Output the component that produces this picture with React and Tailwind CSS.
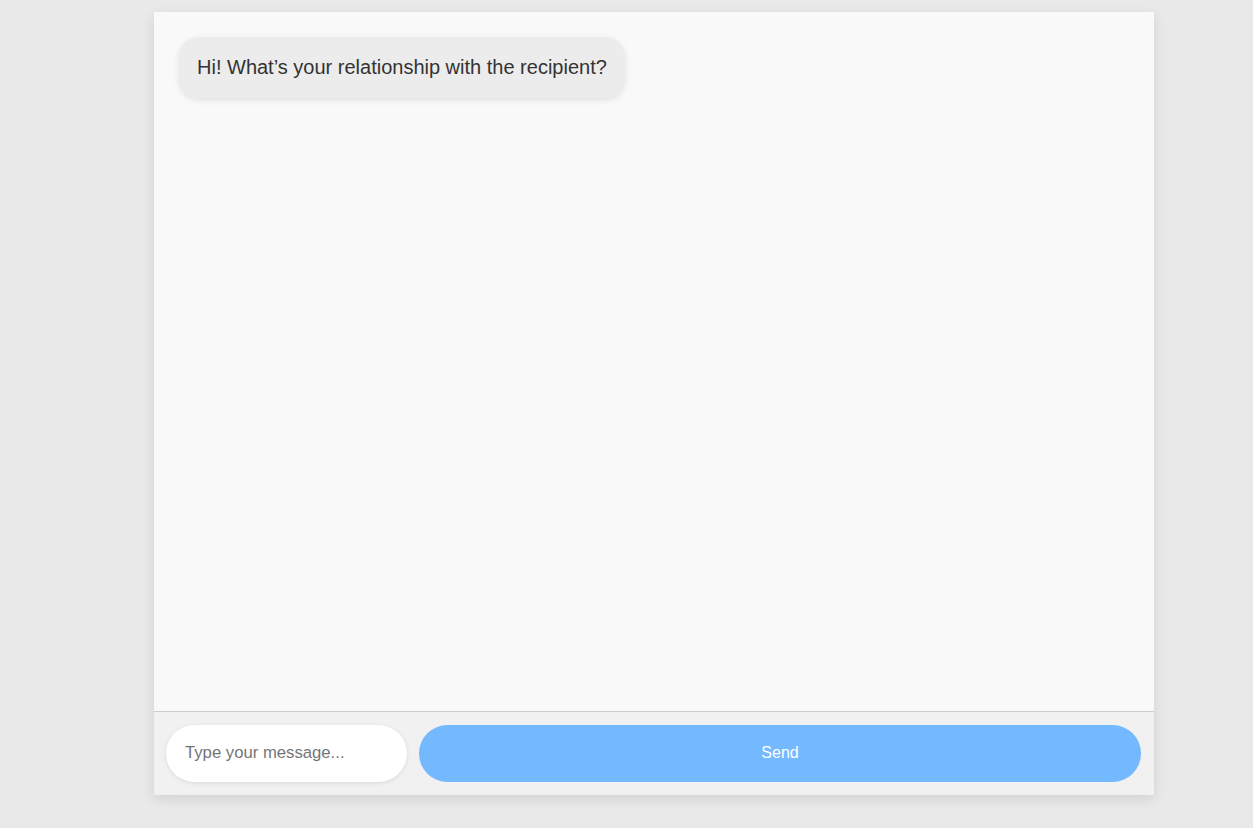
export default function App() {
  return (
    <div className="min-h-[828px] w-full bg-[#e9e9e9] pt-[12px]" style={{ fontFamily: '"Liberation Sans", Arial, sans-serif' }}>
      <div className="ml-[154px] flex h-[783px] w-[1000px] flex-col bg-[#f9f9f9] shadow-[0_4px_12px_rgba(0,0,0,0.1)]">
        <div className="flex-1 px-[25px] pt-[25px]">
          <div className="inline-block rounded-[20px] bg-[#ececec] px-[18px] py-[19px] text-[20px] leading-[23px] text-[#333] shadow-[0_2px_6px_rgba(0,0,0,0.1)]">
            Hi! What’s your relationship with the recipient?
          </div>
        </div>
        <div className="flex gap-[12px] border-t border-[#cccccc] bg-[#f1f1f1] pl-[12px] pr-[13px] pt-[13px] pb-[13px]">
          <input
            className="h-[57px] w-[241px] rounded-full bg-white pl-[19px] pr-[18px] pb-[2px] text-[16.7px] text-[#333] placeholder-[#757575] shadow-[0_1px_4px_rgba(0,0,0,0.1)] outline-none"
            placeholder="Type your message..."
          />
          <button className="h-[57px] flex-1 rounded-full bg-[#74b9ff] pb-[2px] text-[16px] text-white">Send</button>
        </div>
      </div>
    </div>
  );
}
